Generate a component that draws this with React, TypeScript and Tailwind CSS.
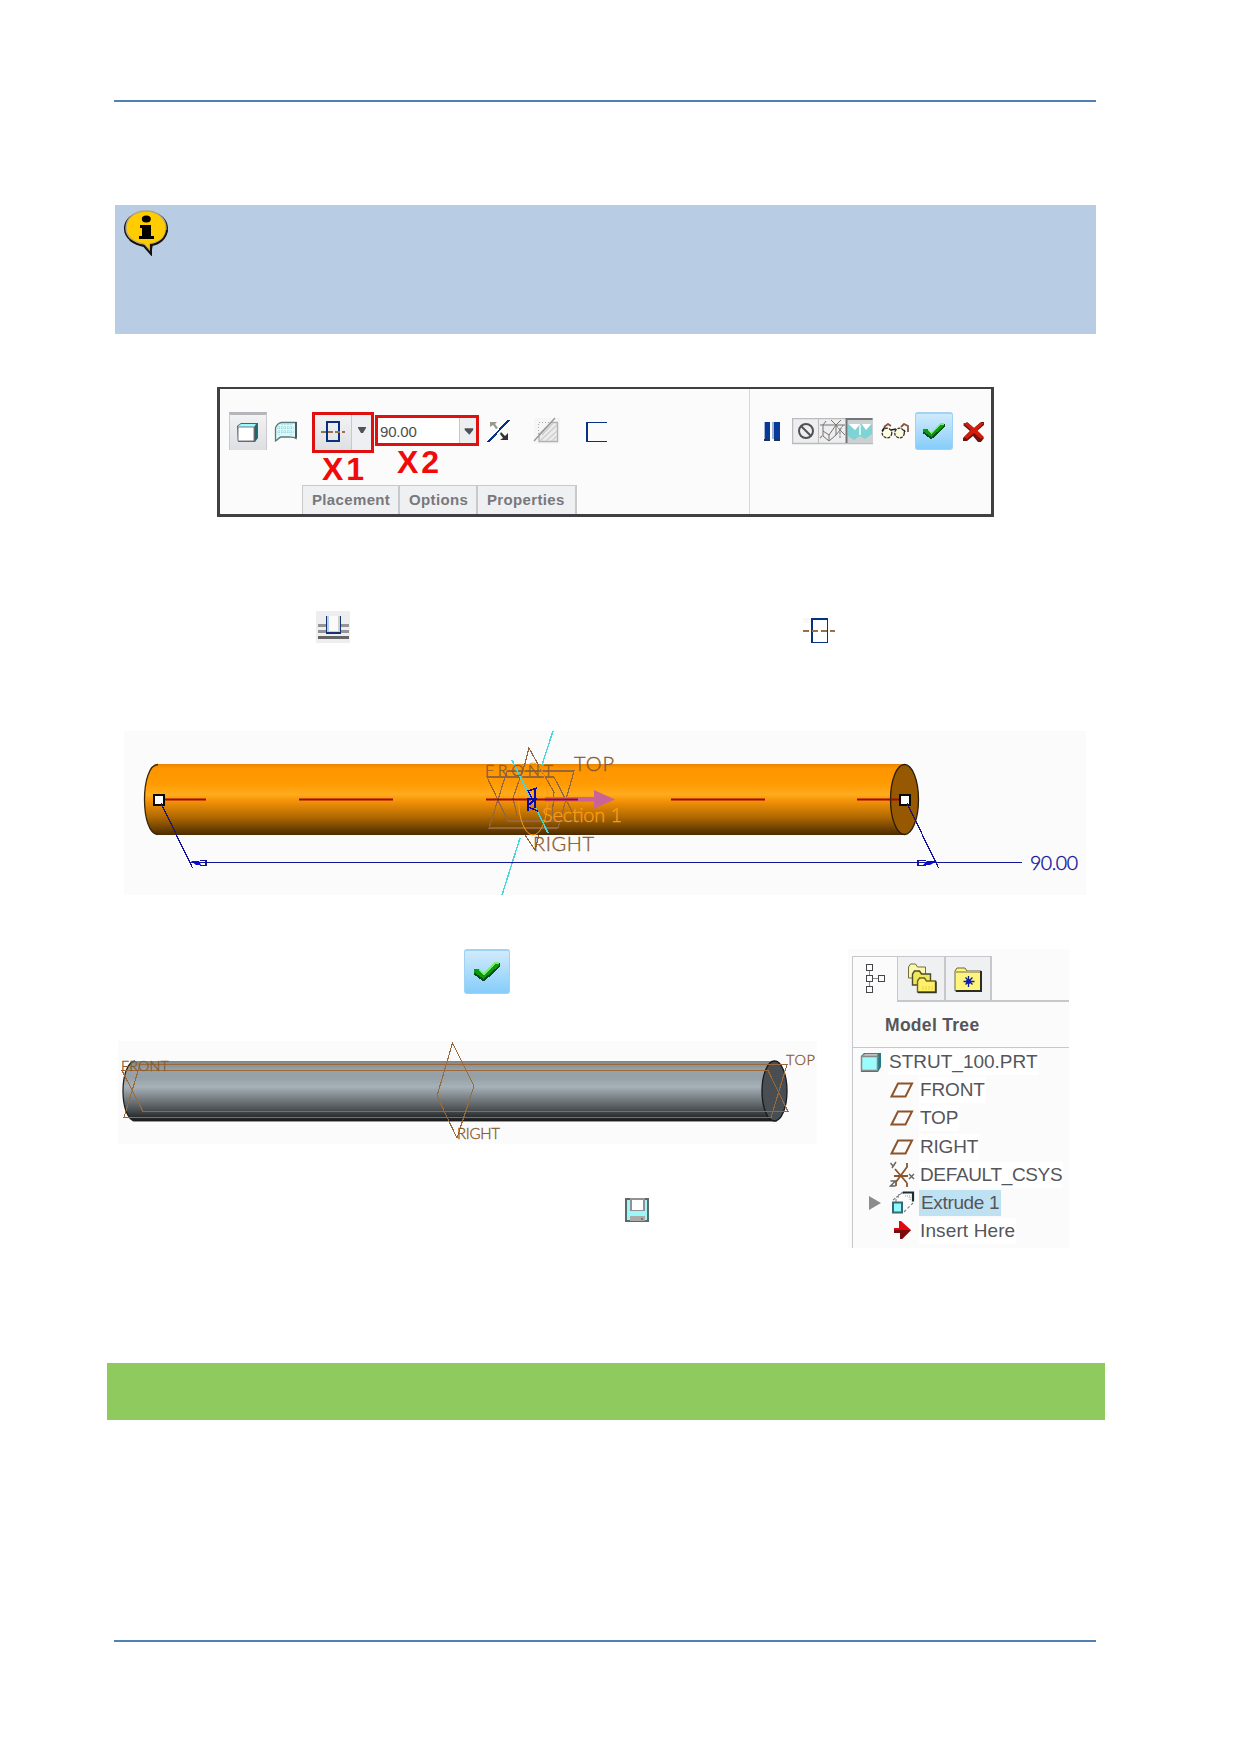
import type { ReactNode } from "react";

type ArtProps = { box: string; className: string; children: ReactNode };

function Art({ box, className, children }: ArtProps) {
  return (
    <svg viewBox={box} className={"block shrink-0 " + className} fill="none">
      {children}
    </svg>
  );
}

function CheckButton({ className }: { className: string }) {
  return (
    <div className={"shrink-0 rounded-[3px] border border-t-2 border-[#9fd2f3] bg-linear-to-b from-[#d0eafc] to-[#84cdfa] " + className}>
      <svg viewBox="0 0 38 38" className="-mt-px block h-full w-full" shapeRendering="crispEdges">
        <path d="M7 19h5l4 4L27 12h4v3L17 28h-2L7 22Z" fill="#064f18" />
        <path d="M7 17h5l4 4L26 11h4v3L16 26 7 20Z" fill="#0a9b0e" />
        <path d="M12 17l4 4L26 11h4v1.500h-3L16 23l-4-4Z" fill="#7eea76" />
      </svg>
    </div>
  );
}

function InfoIcon() {
  return (
    <Art box="122 208 48 48" className="h-[48px] w-[48px]">
      <path d="M147 211c12 0 21 8 21 17 0 8-6 14-15 16l-2 11-7-9c-11-1-20-8-20-17 0-11 10-18 23-18Z" fill="#111" />
      <path d="M146 211c11 0 20 7 20 17s-6 14-16 16v7l-6-7c-11-1-18-8-18-16 0-10 9-17 20-17Z" fill="#fc0" stroke="#b7a77f" strokeWidth="1.500" />
      <path d="M130 240c4 3 8 5 14 6l7 8v-9c8-1 15-6 16-15" stroke="#16130c" strokeWidth="2" />
      <ellipse cx="146.300" cy="219" rx="4.500" ry="3.500" fill="#000" />
      <path d="M140 225h11v11h3v3h-15v-3h3v-8h-2Z" fill="#000" />
    </Art>
  );
}

function SymmetricIcon() {
  return (
    <Art box="320 420 26 23" className="h-[23px] w-[26px]">
      <g shapeRendering="crispEdges">
        <rect x="327" y="422" width="12" height="19" stroke="#063080" strokeWidth="2" />
        <path d="M321 431.500h24" stroke="#94704c" strokeWidth="2" strokeDasharray="5 2" />
      </g>
    </Art>
  );
}

function Toolbar() {
  return (
    <section className="ml-[217px] mt-[53px] flex h-[130px] w-[777px] border-[3px] border-t-2 border-[#404042] bg-[#fbfbfb]">
      <div className="relative w-[530px] border-r border-[#d8d8da]">
        <div className="flex pl-[9px] pt-[23px]">
          <div className="flex h-[38px] w-[38px] items-center justify-center border-x border-t-[3px] border-x-[#c8cacd] border-t-[#b4b6b9] bg-linear-to-b from-[#f2f2f4] to-[#dedfe3] pr-[2px]">
            <Art box="0 0 21 20" className="h-[20px] w-[21px]">
              <path d="M0 3 4 0h17v15l-3 4H1Z" fill="#4c6063" />
              <path d="M1 3 4 1h15l-2 3H1Z" fill="#9ff8fa" />
              <path d="M1 4h16v14H1Z" fill="#fff" stroke="#778" strokeWidth="1" />
              <path d="M18 4 20 1v14l-2 3Z" fill="#176b70" />
            </Art>
          </div>
          <Art box="274 420 24 23" className="ml-[7px] mt-[8px] h-[23px] w-[24px]">
            <path d="M275.500 441v-13c1-3 3-5 6-5.500h14.500v16c-3-2-5-1-7-1.500h-8c-2 0-3 3-5.500 4Z" fill="#dbf8fa" stroke="#5a7779" strokeWidth="1.300" />
            <path d="M279 426v9m3-11v10m3-10v10m3-10v10m3-10v11m-14-7h18m-18 4h18" stroke="#7bc9cf" strokeWidth=".8" strokeDasharray="1 1" />
            <path d="M296 422v16" stroke="#4a5a5c" strokeWidth="2" />
          </Art>
          <div className="ml-[14px] flex h-[41px] w-[62px] border-[3px] border-[#de1010] bg-[#eeeff2]">
            <div className="flex w-[37px] items-center justify-center border-r border-[#c6c8cc] bg-linear-to-b from-[#f3f3f5] to-[#dddfe3] pb-[2px]">
              <SymmetricIcon />
            </div>
            <Art box="0 0 18 35" className="h-[35px] w-[18px]"><path d="M6 12h8v1l-3 5h-2l-3-5Z" fill="#505257" /></Art>
          </div>
          <div className="ml-px mt-[3px] flex h-[31px] w-[104px] border-[3px] border-[#de1010] bg-white">
            <span className="w-[81px] pl-[2px] font-['Liberation_Sans'] text-[15px] leading-[27px] tracking-[-0.200px] text-[#4c4c50]">90.00</span>
            <Art box="0 0 17 25" className="h-[25px] w-[17px] border-l border-[#c6c8cc] bg-[#eceef0]"><path d="M5 10h9v2l-4 5-5-5Z" fill="#4e5157" /></Art>
          </div>
          <Art box="487 418 24 25" className="ml-[8px] mt-[6px] h-[25px] w-[24px]">
            <path d="M488 442 509 420" stroke="#063080" strokeWidth="2" shapeRendering="crispEdges" />
            <path d="M490 422h7l-2 2 3 4-2 1-3-4-3 2Z" fill="#96998c" />
            <path d="M501 432l4 4 3-3v7h-8l3-2-3-4Z" fill="#333" />
          </Art>
          <Art box="533 417 28 28" className="ml-[22px] mt-[5px] h-[28px] w-[28px]">
            <path d="M534 418h26v26h-26Z" fill="#f6f6f6" />
            <path d="M539 441.500v-7l12-12h6.500v19Z" fill="#ececec" stroke="#b0b0b0" strokeWidth="1.300" />
            <path d="M540 441 557 425m-11 16 11-10m-5 10 5-5m-15-1 11-12" stroke="#ccc" strokeWidth="1.200" />
            <path d="M538.500 434v-11.500h11" stroke="#aaa" strokeDasharray="1 2" />
            <path d="M534 441 555 418" stroke="#9b9b9b" strokeWidth="1.500" />
          </Art>
          <Art box="585 421 22 22" className="ml-[24px] mt-[9px] h-[22px] w-[22px]">
            <path d="M607 422.500h-20v19h20" stroke="#073282" strokeWidth="1.700" shapeRendering="crispEdges" />
          </Art>
        </div>
        <div className="absolute left-[102px] top-[62px] font-['Liberation_Sans'] text-[32px] font-bold leading-[36px] tracking-[3px] text-[#f10a0a]">X1</div>
        <div className="absolute left-[177px] top-[55px] font-['Liberation_Sans'] text-[32px] font-bold leading-[36px] tracking-[3px] text-[#f10a0a]">X2</div>
        <div className="absolute bottom-0 left-[82px] flex h-[29px] border-l border-t border-[#c7c9cd] bg-[#eff0f2] font-['Liberation_Sans'] text-[15px] font-bold leading-[28px] tracking-[0.350px] text-[#78787d]">
          <div className="w-[97px] border-r-2 border-[#c7c9cd] pl-[9px]">Placement</div>
          <div className="w-[78px] border-r-2 border-[#c7c9cd] pl-[9px]">Options</div>
          <div className="w-[99px] border-r-2 border-[#c7c9cd] pl-[9px]">Properties</div>
        </div>
      </div>
      <div className="flex grow pt-[23px]">
        <Art box="764 422 17 20" className="ml-[14px] mt-[10px] h-[20px] w-[17px]">
          <g shapeRendering="crispEdges">
            <path d="M764 422h6v19h-6Zm10 0h6v19h-6Z" fill="#063a99" />
            <path d="M764 439h6v2h-6Zm10 0h6v2h-6Z" fill="#25304d" />
            <path d="M764 422v17m9 -17v17" stroke="#a4b5d0" strokeWidth="2" />
          </g>
        </Art>
        <Art box="792 418 81 27" className="ml-[11px] mt-[6px] h-[27px] w-[81px]">
          <path d="M792.500 418.500h80v25h-80Z" fill="#eeeef0" stroke="#b9bbbd" strokeWidth="1.500" />
          <path d="M846 418h27v25h-27Z" fill="#cdd0d2" />
          <path d="M818.500 418v26" stroke="#bbb" />
          <circle cx="806" cy="431" r="7" stroke="#505154" strokeWidth="2" />
          <path d="M801 426 811 436" stroke="#505154" strokeWidth="2" />
          <path d="M820 425h25M823 425v11l6 5 7-6V425M836 435l4-5 5 5M823 431l6 4 7-10M829 435v6M836 425l-5-5M836 425l5-5M823 425l3-4" stroke="#77736f" strokeWidth="1" />
          <path d="M820 438l3-3M836 425l4 5v8m0-8 3-5" stroke="#8b8987" strokeWidth="1.200" strokeDasharray="3 1" />
          <path d="M848 424v12l6 4 6-4 5 3 7-5v-10l-6 6-5-6-6 6Z" fill="#7ed3d5" />
          <path d="M849 424h11l-5 6Zm13 0h9l-5 6Z" fill="#fff" />
          <path d="M860 425v10" stroke="#d3f5f1" strokeWidth="2" />
          <path d="M846.500 443v-24h26" stroke="#737679" strokeWidth="2" />
        </Art>
        <Art box="880 423 30 17" className="ml-[7px] mt-[11px] h-[17px] w-[30px]">
          <ellipse cx="887" cy="433" rx="4.800" ry="4.800" fill="#fdfde0" stroke="#35322c" strokeWidth="1.300" strokeDasharray="3 1" />
          <ellipse cx="899.500" cy="433" rx="4.800" ry="4.800" fill="#fdfde0" stroke="#35322c" strokeWidth="1.300" strokeDasharray="3 1" />
          <path d="M882 431l3-4m6 3 5-1m8 1 1 2" stroke="#222" strokeWidth="1.500" />
          <path d="M884 427l4-3 3 2m10 1 3-3 4 2v6" stroke="#86553c" strokeWidth="1.800" />
        </Art>
        <CheckButton className="ml-[5px] h-[38px] w-[38px]" />
        <Art box="962 421 23 21" className="ml-[9px] mt-[9px] h-[21px] w-[23px]">
          <path d="M963 425l4-3 7 6 7-6h3v3l-7 6 7 7-3 4h-3l-5-6-6 5h-4v-3l7-7Z" fill="#6b130c" />
          <path d="M963 423h5l6 5 6-5h4l-7 7 7 7-3 2-7-6-7 6-3-2 7-7Z" fill="#d51c0b" />
        </Art>
      </div>
    </section>
  );
}

function PreviewModel() {
  return (
    <Art box="124 731 962 164" className="ml-[124px] mt-[88px] h-[164px] w-[962px] bg-[#fbfbfb]">
      <defs>
        <linearGradient id="orange" x1="0" y1="0" x2="0" y2="1">
          <stop offset="0" stopColor="#e98500" />
          <stop offset=".06" stopColor="#ff9500" />
          <stop offset=".28" stopColor="#ff9b02" />
          <stop offset=".43" stopColor="#ffab1c" />
          <stop offset=".52" stopColor="#f59208" />
          <stop offset=".75" stopColor="#af6800" />
          <stop offset="1" stopColor="#4a2b00" />
        </linearGradient>
      </defs>
      <path d="M158 764H904V835H158C140 835 140 764 158 764Z" fill="url(#orange)" />
      <path d="M158 764.500C140 764.500 140 834.500 158 834.500" stroke="#392710" strokeWidth="1.300" />
      <ellipse cx="904.500" cy="799.500" rx="14" ry="35" fill="#965800" stroke="#2b1c0b" strokeWidth="1.300" />
      <g stroke="#94663a" strokeWidth="1.200" shapeRendering="crispEdges">
        <path d="M487 777h67l23 44h-69Z" />
        <path d="M507 771h67l-16 57h-69Z" />
        <path d="M525 764l4-16 11 20m-15 67 10 15 4-15m-14-71-12 34 5 22m22-52 14 24-2 27" />
      </g>
      <ellipse cx="533" cy="799" rx="14.500" ry="36" stroke="#ff9b0a" />
      <path d="M165 799.500h41M299 799.500h94M671 799.500h94M857 799.500h43" stroke="#9e0909" strokeWidth="2" />
      <path d="M545 797h49v-7l21 9.500-21 9v-7h-49Z" fill="#ca6497" />
      <path d="M486 799.500h92" stroke="#9e0909" strokeWidth="2" />
      <g stroke="#4cd5d9" strokeWidth="1.400" shapeRendering="crispEdges">
        <path d="M553 731 542 765M512 760 548 833M520 838 502 895" />
      </g>
      <path d="M535 788v20m-7-18 4 9m-4 12v-12h9m-9-8 9-3m-9 19 10 4m-3-12-6 6" stroke="#0909aa" strokeWidth="1.500" shapeRendering="crispEdges" />
      <g fontFamily="Lato, Liberation Sans, sans-serif" fontWeight="300" strokeWidth=".35">
        <g fill="#8a5a2c" stroke="#8a5a2c">
          <text x="485" y="776" fontSize="16" textLength="68">FRONT</text>
          <text x="574" y="771" fontSize="20" textLength="40">TOP</text>
          <text x="533" y="851" fontSize="20" textLength="61">RIGHT</text>
        </g>
        <text x="542" y="822" fontSize="20" fill="#f99c18" stroke="#f99c18" textLength="80">Section 1</text>
        <text x="1030" y="870" fontSize="19.500" fill="#0f0f9a" stroke="#0f0f9a" textLength="48">90.00</text>
      </g>
      <path d="M154 794.500h10v10h-10Zm745.500 0h10v10h-10Z" fill="#fff" stroke="#080808" strokeWidth="2" shapeRendering="crispEdges" />
      <g stroke="#141499" strokeWidth="1.300" shapeRendering="crispEdges">
        <path d="M161 803 192.500 868M907 803 938.500 868M190 862.500h832" />
        <path d="M200 860.500h6v5h-6M926 865.500h-8v-5h8" />
      </g>
      <path d="M191 861h8l2 4h-5ZM937 861h-10l-4 4h7Z" fill="#0b0bd0" />
    </Art>
  );
}

function SolidModel() {
  return (
    <Art box="118 1041 699 103" className="mt-[47px] h-[103px] w-[699px] bg-[#fbfbfb]">
      <defs>
        <linearGradient id="steel" x1="0" y1="0" x2="0" y2="1">
          <stop offset="0" stopColor="#7d868c" />
          <stop offset=".15" stopColor="#99a2a8" />
          <stop offset=".28" stopColor="#95a0a7" />
          <stop offset=".43" stopColor="#a7b1b8" />
          <stop offset=".6" stopColor="#7e868b" />
          <stop offset=".8" stopColor="#4f5356" />
          <stop offset="1" stopColor="#181a1b" />
        </linearGradient>
      </defs>
      <path d="M135 1061H775V1121H135C119 1119 119 1063 135 1061Z" fill="url(#steel)" />
      <path d="M135 1061C119 1063 119 1119 135 1121" stroke="#202325" strokeWidth="1.300" />
      <path d="M133 1121.500H777" stroke="#999" />
      <ellipse cx="774.500" cy="1091" rx="12.500" ry="30" fill="#494e52" stroke="#17191b" strokeWidth="1.300" />
      <g stroke="#9b6838" strokeWidth="1.100" shapeRendering="crispEdges">
        <path d="M140 1064.500h647l-16 53H124Z" />
        <path d="M122 1070.500h646l20 41H143Z" />
        <path d="M452.500 1043 474 1086 457 1138 437 1096Z" />
      </g>
      <g fontFamily="Lato, Liberation Sans, sans-serif" fontWeight="300" fill="#8a5a2c" stroke="#8a5a2c" strokeWidth=".35">
        <text x="121" y="1071" fontSize="14.500" textLength="48">FRONT</text>
        <text x="786" y="1065" fontSize="14.500" textLength="29">TOP</text>
        <text x="457" y="1139" fontSize="15" textLength="43">RIGHT</text>
      </g>
    </Art>
  );
}

function PlaneIcon() {
  return (
    <Art box="0 0 24 16" className="h-[16px] w-[24px]">
      <path d="M1.500 14.500 8 1.500h14l-6.500 13Z" stroke="#8b542c" strokeWidth="2" />
    </Art>
  );
}

function TreeRow({ icon, label, tracking = "" }: { icon: ReactNode; label: string; tracking?: string }) {
  return (
    <div className="flex h-[28px] items-center pl-[37px]">
      <div className="flex w-[24px] shrink-0 justify-center">{icon}</div>
      <span className={"ml-[5px] bg-white px-[1px] leading-[26px] whitespace-nowrap " + tracking}>{label}</span>
    </div>
  );
}

function ModelTree() {
  return (
    <aside className="ml-[31px] h-[299px] w-[221px] bg-[#fbfbfb] pl-[4px] pt-[7px] font-['Liberation_Sans'] text-[19px] text-[#55555a]">
      <div className="h-[292px] border-l border-[#c6c8cb]">
        <div className="flex h-[46px]">
          <div className="w-[45px] border-r border-t border-[#c6c8cb]">
            <Art box="865 963 22 31" className="ml-[12px] mt-[6px] h-[31px] w-[22px]">
              <g stroke="#46464a" strokeWidth="1.500" shapeRendering="crispEdges">
                <path d="M869.500 970v5m0 7v5m3-8.500h6" stroke="#88888c" />
                <path d="M866.500 964.500h6v6h-6Zm0 11h6v6h-6Zm0 11h6v6h-6Zm12-11h6v6h-6Z" />
              </g>
            </Art>
          </div>
          <div className="w-[47px] border-b-2 border-r border-t border-[#c6c8cb] bg-[#eff0f2]">
            <Art box="907 963 30 31" className="ml-[9px] mt-[6px] h-[31px] w-[30px]">
              <path d="M908.500 978v-11l2-3h5l2 3h8v11Z" fill="#faf8b0" stroke="#716d35" />
              <path d="M912.500 985v-11l2-3h5l2 3h9v11Z" fill="#f0e65e" stroke="#4d4a29" strokeWidth="1.400" />
              <path d="M917.500 992v-11l2-3h5l2 3h9v11Z" fill="#fff06b" stroke="#6c6524" strokeWidth="1.400" />
              <path d="M918 992.500h18v-11" stroke="#353421" strokeWidth="1.500" />
              <path d="M922 987h12m-12 2h12" stroke="#e8d33c" strokeDasharray="2 1" />
            </Art>
          </div>
          <div className="w-[47px] border-b-2 border-l border-r-2 border-t border-[#c6c8cb] bg-[#eff0f2]">
            <Art box="953 967 29 26" className="ml-[8px] mt-[10px] h-[26px] w-[29px]">
              <path d="M954 971l2-3h8l2 3h14v20h-26Z" fill="#fff47c" stroke="#6b6840" />
              <path d="M955 972h24" stroke="#bbb06a" strokeWidth="2" />
              <path d="M955 991h25v-20" stroke="#2d2c22" strokeWidth="2" />
              <path d="M967.500 976v11m-5-5.500h11m-9-4 7 7m0-7-7 7" stroke="#172088" strokeWidth="1.300" />
              <circle cx="967.500" cy="981.500" r="2.500" fill="#0820bd" />
            </Art>
          </div>
          <div className="grow border-b-2 border-[#c6c8cb]" />
        </div>
        <div className="h-[46px] border-b border-[#c6c8cb] pl-[32px] text-[17.500px] font-bold leading-[46px] tracking-[0.300px]">Model Tree</div>
        <div className="flex h-[28px] items-center">
          <Art box="860 1052 22 21" className="ml-[7px] h-[21px] w-[22px]">
            <path d="M861 1056l3-3h17v14l-3 5h-17Z" fill="#247d84" />
            <path d="M862 1056l3-2h13l-1 2Z" fill="#e5e5e5" stroke="#898989" strokeWidth=".8" />
            <path d="M861.500 1056.500h16v14h-16Z" fill="#9cfcfc" stroke="#878989" strokeWidth="1.500" />
          </Art>
          <span className="ml-[6px] bg-white px-[1px] leading-[26px]">STRUT_100.PRT</span>
        </div>
        <TreeRow icon={<PlaneIcon />} label="FRONT" tracking="tracking-[-0.150px]" />
        <TreeRow icon={<PlaneIcon />} label="TOP" tracking="tracking-[-0.200px]" />
        <div className="pt-[0.500px]">
          <TreeRow icon={<PlaneIcon />} label="RIGHT" tracking="tracking-[-0.200px]" />
          <TreeRow
            label="DEFAULT_CSYS"
            tracking="tracking-[-0.350px]"
            icon={
              <Art box="890 1161 26 27" className="h-[27px] w-[26px]">
                <path d="M895 1176h14M896 1169l12 14M908 1163v4L897 1182v4M908 1183v4" stroke="#8b542c" strokeWidth="1.800" />
                <path d="M891.500 1163l2.500 3m3-4-4 6m17 6 5 5m0-5-5 5m-18.500 2h5l-5 5h5" stroke="#67625d" strokeWidth="1.400" />
              </Art>
            }
          />
          <div className="flex h-[28px] items-center">
            <Art box="0 0 12 14" className="ml-[16px] h-[14px] w-[12px]"><path d="M0 0 12 7 0 14Z" fill="#8c8c8e" /></Art>
            <Art box="891 1192 24 23" className="ml-[10px] h-[23px] w-[24px]">
              <path d="M893 1203.500h9v10h-9Z" fill="#8ffafa" stroke="#3a6870" strokeWidth="2" />
              <path d="M893 1201 903 1193M904 1213 913 1204M896 1203v-5h4m-2-2 6-2" stroke="#7a8082" strokeWidth="1.100" strokeDasharray="3 2" />
              <path d="M903 1193.500h10v9" stroke="#182e32" strokeWidth="2.200" />
              <path d="M905 1197h5v5" stroke="#6fa7ad" strokeDasharray="1 1" />
            </Art>
            <span className="ml-[4px] bg-[#bfe2f3] pl-[2px] pr-[2px] leading-[26px] tracking-[-0.350px]">Extrude 1</span>
          </div>
          <TreeRow
            tracking="tracking-[0.120px]"
            label="Insert Here"
            icon={
              <Art box="895 1222 17 19" className="h-[19px] w-[17px]">
                <path d="M895 1229h5v-7h2l10 9-9 9h-2v-6h-6Z" fill="#e20811" />
                <path d="M895 1231h17l-9 9h-2v-6h-6Z" fill="#790b0f" />
              </Art>
            }
          />
        </div>
      </div>
    </aside>
  );
}

export default function App() {
  return (
    <main className="flex h-[1754px] w-[1240px] flex-col overflow-hidden bg-white">
      <div className="ml-[114px] mt-[100px] h-[2px] w-[982px] shrink-0 bg-[#4f81b3]" />
      <section className="ml-[115px] mt-[103px] h-[129px] w-[981px] shrink-0 bg-[#b8cce4] pl-[7px] pt-[3px]">
        <InfoIcon />
      </section>
      <Toolbar />
      <div className="ml-[316px] mt-[94px] flex h-[32px] items-end">
        <Art box="316 611 34 32" className="h-[32px] w-[34px]">
          <g shapeRendering="crispEdges">
            <path d="M316 611h34v32h-34Z" fill="#eeeef0" />
            <path d="M318 624h31v3h-31Zm0 6h31v3h-31Z" fill="#939496" />
            <path d="M318 636h31v3h-31Z" fill="#656568" />
            <path d="M326 616h15v17h-15Z" fill="#b7cef0" />
            <path d="M329 616h9v15h-9Z" fill="#fafafa" />
            <path d="M339 616v16h-10" stroke="#d2d0cd" strokeWidth="2" />
            <path d="M326.500 616v17h14v-17" stroke="#12336f" strokeWidth="1.500" />
          </g>
        </Art>
        <Art box="803 617 33 26" className="ml-[453px] h-[26px] w-[33px]">
          <g shapeRendering="crispEdges">
            <path d="M803 618h8v5h-8Z" fill="#f8f8f8" />
            <path d="M811 618h17v25h-17Z" fill="#073282" />
            <path d="M813 620h14v22h-14Z" fill="#fff" />
            <path d="M803 631h32" stroke="#98704a" strokeWidth="2" strokeDasharray="6 3" />
          </g>
        </Art>
      </div>
      <PreviewModel />
      <div className="ml-[118px] mt-[54px] flex">
        <div className="w-[699px]">
          <CheckButton className="ml-[346px] h-[45px] w-[46px]" />
          <SolidModel />
          <Art box="0 0 24 24" className="ml-[507px] mt-[54px] h-[24px] w-[24px]">
            <g shapeRendering="crispEdges">
              <path d="M0 0h24v24H0Z" fill="#59696c" />
              <path d="M2 2h20v20H2Z" fill="#9bf8fa" />
              <path d="M5 0h15v13H5Z" fill="#929294" />
              <path d="M7 2h11v10H7Z" fill="#fff" />
              <path d="M5 18h15v5H5Z" fill="#aaa" />
              <path d="M16 20h2v2h-2Z" fill="#777" />
            </g>
          </Art>
        </div>
        <ModelTree />
      </div>
      <div className="ml-[107px] mt-[115px] h-[57px] w-[998px] shrink-0 bg-[#8eca5d]" />
      <div className="ml-[114px] mt-[220px] h-[2px] w-[982px] shrink-0 bg-[#4f81b3]" />
    </main>
  );
}
